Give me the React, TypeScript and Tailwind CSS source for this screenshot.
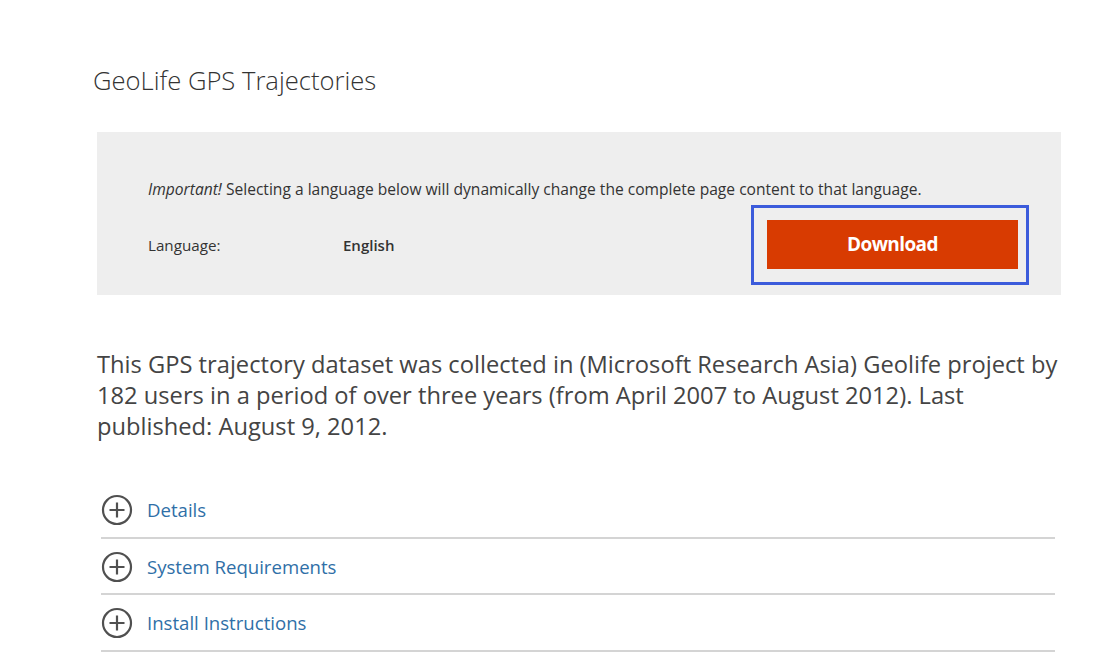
const sections = ["Details", "System Requirements", "Install Instructions"];

const PlusCircle = () => (
  <svg width="32" height="32" viewBox="0 0 32 32" fill="none" stroke="#505050" strokeWidth="2.2">
    <circle cx="16" cy="16" r="14" />
    <path d="M16 8.5v15M8.5 16h15" />
  </svg>
);

export default function App() {
  return (
    <div className="min-h-screen bg-white text-[#333]" style={{ fontFamily: '"Open Sans", "Noto Sans", sans-serif' }}>
      <div className="pl-[97px] pr-[48px]">
        <h1 className="-ml-[4px] pt-[62px] text-[25.6px] font-light leading-[38px] text-[#333]">
          GeoLife GPS Trajectories
        </h1>

        <div className="mt-[32px] h-[163px] bg-[#eeeeee] pl-[51px] pr-[32px] pt-[46px]">
          <p className="text-[15.6px] leading-[22px] text-[#333]">
            <em>Important!</em> Selecting a language below will dynamically change the complete page content to that language.
          </p>
          <div className="mt-[5px] flex items-center">
            <span className="w-[195px] text-[15.2px] text-[#333]">Language:</span>
            <span className="text-[15px] font-semibold text-[#333]">English</span>
            <div className="ml-auto border-[3px] border-[#3b5bdb] pb-[13px] pl-[13px] pr-[8px] pt-[12px]">
              <button className="flex h-[49px] w-[251px] items-center justify-center bg-[#d83b01] text-[19px] font-bold tracking-[-0.6px] text-white">
                Download
              </button>
            </div>
          </div>
        </div>

        <p className="mt-[54px] text-[23.7px] leading-[31px] text-[#444]">
          This GPS trajectory dataset was collected in (Microsoft Research Asia) Geolife project by 182 users in a period of over three years (from April 2007 to August 2012). Last published: August 9, 2012.
        </p>

        <div className="mt-[40px] ml-[4px] w-[954px]">
          {sections.map((s) => (
            <div key={s} className="flex h-[56.5px] items-center gap-[14px] border-b-2 border-[#d4d4d4] pt-[2px]">
              <PlusCircle />
              <span className="text-[18.6px] text-[#2f6fa7]">{s}</span>
            </div>
          ))}
        </div>
      </div>
    </div>
  );
}
